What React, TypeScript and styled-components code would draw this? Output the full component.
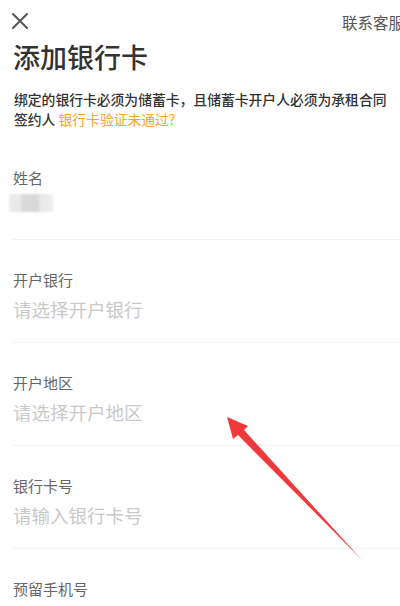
import React from 'react'
import styled, { createGlobalStyle } from 'styled-components'
import { ChevronRight } from 'lucide-react'

const GlobalStyle = createGlobalStyle`
  html, body {
    margin: 0;
    padding: 0;
    background: #fff;
    overflow: hidden;
  }
  body {
    font-family: "Noto Sans CJK SC", "Noto Sans", sans-serif;
  }
`

const Page = styled.div`
  position: relative;
  width: 416px;
  height: 606px;
  overflow: hidden;
  background: #fff;
`

const TopBar = styled.div`
  height: 40px;
  display: flex;
  align-items: center;
  justify-content: space-between;
  padding: 0 12px 0 11px;
`

const CloseButton = styled.button`
  width: 18px;
  height: 18px;
  padding: 0;
  border: none;
  background: none;
  display: flex;
  margin-top: 2px;
`

const Service = styled.span`
  font-size: 15.5px;
  color: #555;
  margin-top: 4px;
`

const Title = styled.h1`
  margin: 0 0 0 13px;
  font-size: 27px;
  line-height: 34px;
  font-weight: 500;
  color: #333;
`

const Notice = styled.p`
  margin: 15px 0 0 14px;
  max-width: 378px;
  font-size: 13.8px;
  line-height: 20px;
  font-weight: 500;
  color: #333;
`

const Link = styled.span`
  color: #f5a623;
  font-weight: 400;
`

const Form = styled.div`
  margin: 9px 0 0 13px;
`

const Field = styled.div<{ $first?: boolean }>`
  display: flex;
  align-items: center;
  justify-content: space-between;
  padding: 30px 5px ${(p) => (p.$first ? 27 : 21)}px 0;
  border-bottom: 1px solid #f2f2f2;
`

const FieldBody = styled.div`
  display: flex;
  flex-direction: column;
`

const Label = styled.span`
  font-size: 15px;
  line-height: 20px;
  color: #666;
`

const Placeholder = styled.span`
  margin-top: 7px;
  font-size: 18.5px;
  line-height: 24px;
  color: #c9c9c9;
`

const MaskedName = styled.div`
  margin: 6px 0 0 -4px;
  width: 44px;
  height: 18px;
  background: linear-gradient(
    to right,
    #ececec 0%,
    #e6e6e6 28%,
    #d9d9d9 30%,
    #d9d9d9 68%,
    #e8e8e8 70%,
    #eeeeee 100%
  );
  filter: blur(1.2px);
`

const Arrow = styled.svg`
  position: absolute;
  left: 0;
  top: 0;
  pointer-events: none;
`

const fields = [
  { label: '开户银行', placeholder: '请选择开户银行', select: true },
  { label: '开户地区', placeholder: '请选择开户地区', select: true },
  { label: '银行卡号', placeholder: '请输入银行卡号', select: false },
]

const App: React.FC = () => {
  return (
    <Page>
      <GlobalStyle />
      <TopBar>
        <CloseButton aria-label="关闭">
          <svg width="18" height="18" viewBox="0 0 18 18">
            <path d="M2 2 L16 16 M16 2 L2 16" stroke="#555" strokeWidth="2" strokeLinecap="round" />
          </svg>
        </CloseButton>
        <Service>联系客服</Service>
      </TopBar>
      <Title>添加银行卡</Title>
      <Notice>
        绑定的银行卡必须为储蓄卡，且储蓄卡开户人必须为承租合同签约人 <Link>银行卡验证未通过?</Link>
      </Notice>
      <Form>
        <Field $first>
          <FieldBody>
            <Label>姓名</Label>
            <MaskedName />
          </FieldBody>
        </Field>
        {fields.map((f) => (
          <Field key={f.label}>
            <FieldBody>
              <Label>{f.label}</Label>
              <Placeholder>{f.placeholder}</Placeholder>
            </FieldBody>
            {f.select && <ChevronRight size={16} color="#d0d0d0" strokeWidth={1.5} />}
          </Field>
        ))}
        <Field>
          <FieldBody>
            <Label>预留手机号</Label>
          </FieldBody>
        </Field>
      </Form>
      <Arrow width="400" height="606" viewBox="0 0 400 606">
        <polygon
          points="227,417 248,426 244,430 362,560 238,435 233,439"
          fill="#f0393b"
        />
      </Arrow>
    </Page>
  )
}

export default App
